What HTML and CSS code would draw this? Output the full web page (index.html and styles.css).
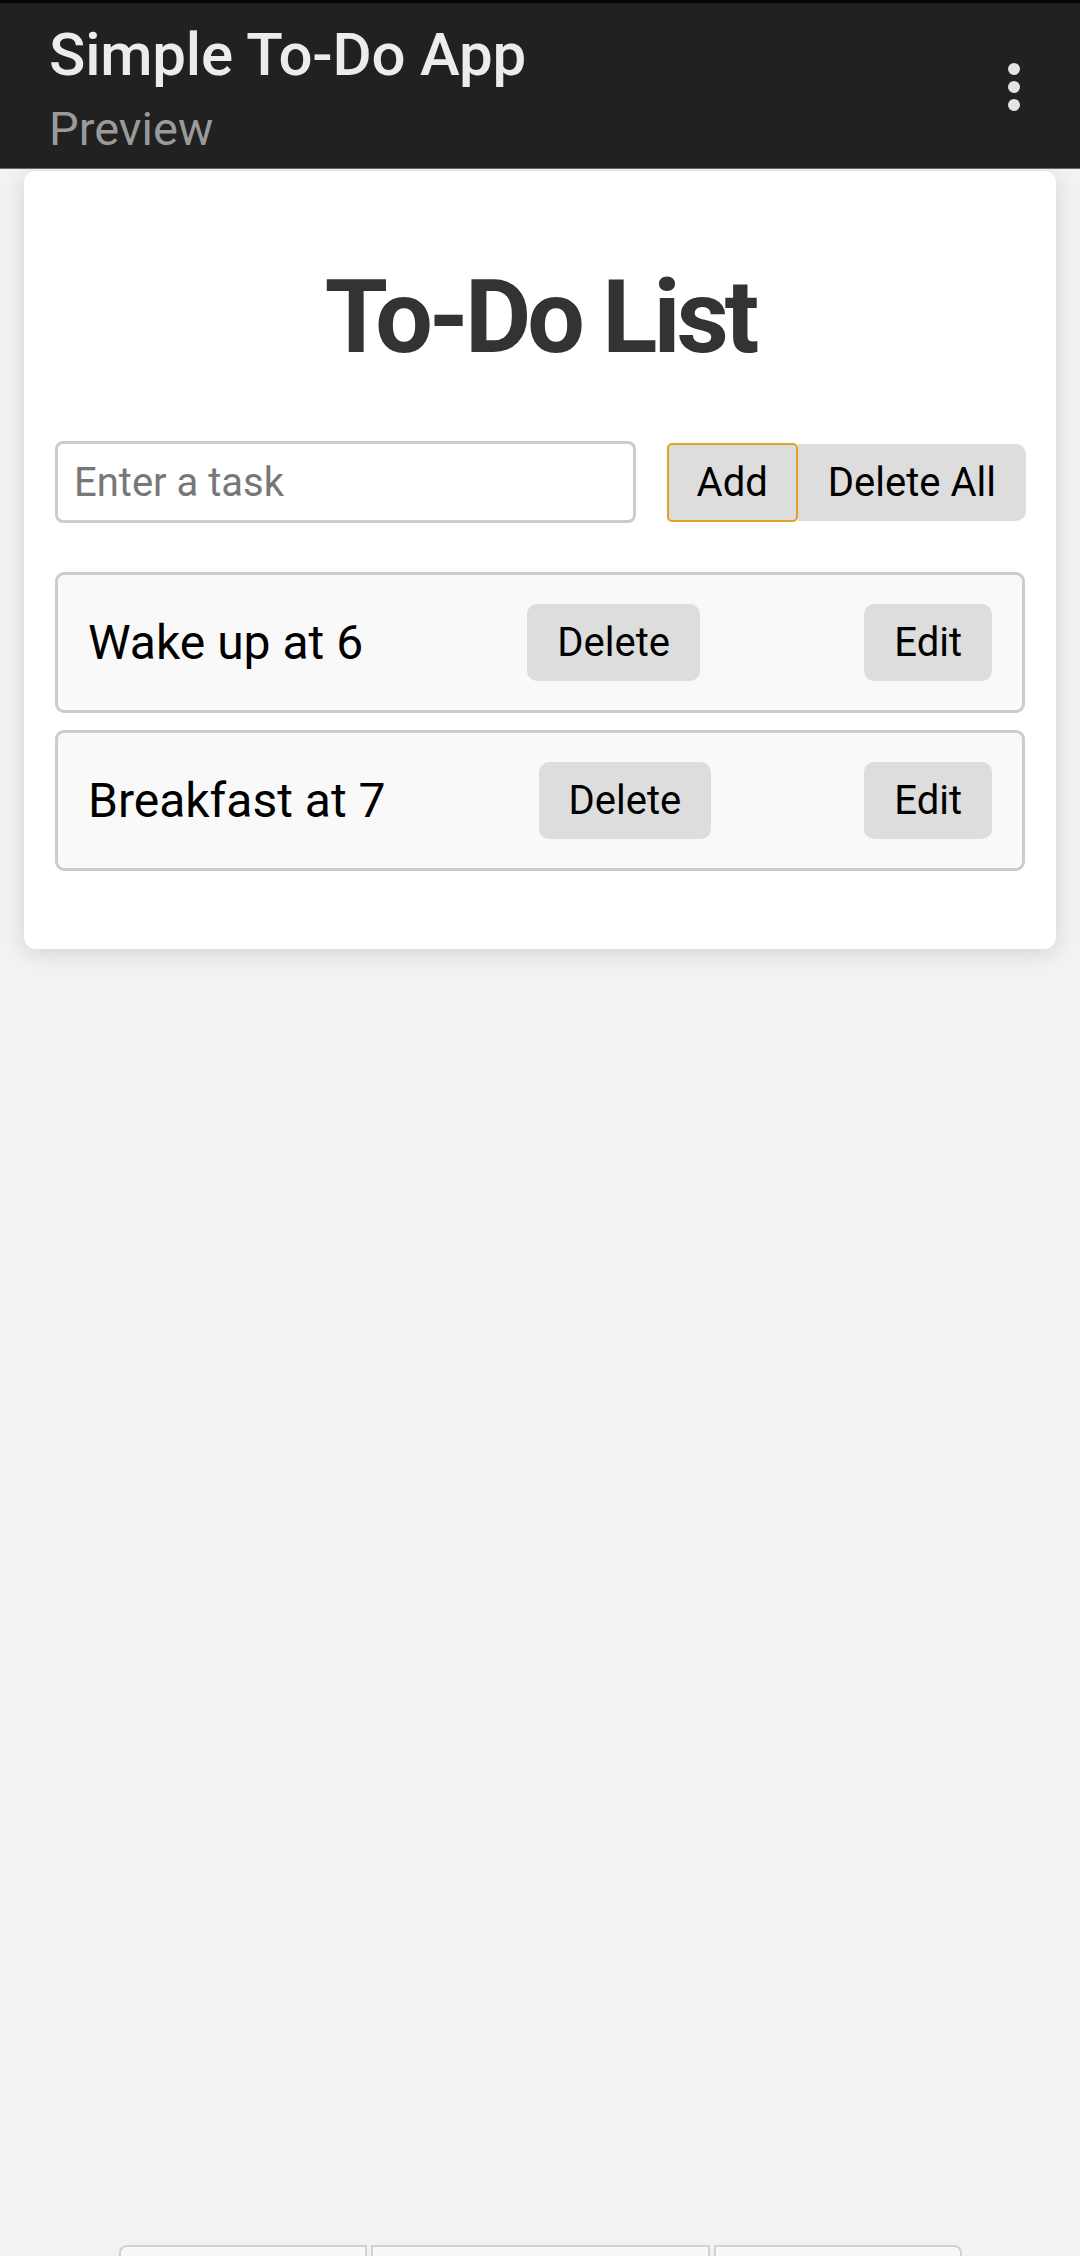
FILE: index.html
```html
<!DOCTYPE html>
<html lang="en">
<head>
<meta charset="utf-8">
<title>Simple To-Do App</title>
<link rel="stylesheet" href="styles.css">
</head>
<body>
  <header class="appbar">
    <div class="appbar-titles">
      <div class="appbar-title">Simple To-Do App</div>
      <div class="appbar-subtitle">Preview</div>
    </div>
    <div class="overflow-menu" aria-label="More options">
      <span class="dot"></span>
      <span class="dot"></span>
      <span class="dot"></span>
    </div>
  </header>

  <main class="card">
    <h1 class="card-title">To-Do List</h1>
    <div class="entry-row">
      <input class="task-input" type="text" placeholder="Enter a task">
      <button class="btn btn-add">Add</button>
      <button class="btn btn-delete-all">Delete All</button>
    </div>
    <ul class="task-list">
      <li class="task">
        <span class="task-text">Wake up at 6</span>
        <button class="btn btn-small">Delete</button>
        <button class="btn btn-small">Edit</button>
      </li>
      <li class="task">
        <span class="task-text">Breakfast at 7</span>
        <button class="btn btn-small">Delete</button>
        <button class="btn btn-small">Edit</button>
      </li>
    </ul>
  </main>

  <div class="bottom-bar">
    <span class="seg seg-first"></span>
    <span class="seg seg-mid"></span>
    <span class="seg seg-last"></span>
  </div>
</body>
</html>
```

FILE: styles.css
```css
html, body {
  margin: 0;
  padding: 0;
}

body {
  min-height: 2256px;
  background: #f2f2f2;
  font-family: Roboto, "Noto Sans", "Liberation Sans", sans-serif;
  display: flex;
  flex-direction: column;
  overflow: hidden;
}

.appbar {
  height: 165px;
  background: #212121;
  border-top: 3px solid #050505;
  display: flex;
  justify-content: space-between;
  align-items: center;
  padding: 0 60px 0 49px;
  box-sizing: content-box;
  border-bottom: 1px solid #6a6a6a;
}

.appbar-titles {
  align-self: flex-start;
  padding-top: 17px;
}

.appbar-title {
  font-size: 60px;
  line-height: 70px;
  color: #ececec;
  font-weight: 500;
  letter-spacing: -0.2px;
}

.appbar-subtitle {
  font-size: 47px;
  line-height: 54px;
  margin-top: 12px;
  color: #9a9a9a;
}

.overflow-menu {
  display: flex;
  flex-direction: column;
  gap: 6px;
  margin-top: 3px;
}

.dot {
  width: 12px;
  height: 12px;
  border-radius: 50%;
  background: #e4e4e4;
}

.card {
  margin: 2px 24px 0;
  padding: 30px 30px 30px;
  background: #ffffff;
  border-radius: 12px;
  box-shadow: 0 4px 22px rgba(0, 0, 0, 0.13);
}

.card-title {
  margin: 55px 0 63px;
  text-align: center;
  font-size: 102px;
  line-height: 122px;
  font-weight: 700;
  color: #333333;
  letter-spacing: -4px;
}

.entry-row {
  display: flex;
  align-items: center;
}

.task-input {
  flex: 1;
  height: 82px;
  box-sizing: border-box;
  border: 3px solid #cccccc;
  border-radius: 8px;
  padding: 0 16px;
  margin: 0 31px 0 1px;
  font-family: inherit;
  font-size: 40px;
  color: #222;
  background: #fff;
  outline: none;
}

.task-input::placeholder {
  color: #777777;
}

.btn {
  font-family: inherit;
  font-size: 40px;
  color: #000;
  background: #dddddd;
  border: none;
  cursor: pointer;
  padding: 0 30px;
  box-sizing: border-box;
}

.btn-add {
  height: 79px;
  padding: 0 28px;
  border: 2px solid #e2a228;
  border-radius: 5px;
}

.btn-delete-all {
  height: 77px;
  border-radius: 0 10px 10px 0;
}

.task-list {
  list-style: none;
  margin: 49px 1px 48px;
  padding: 0;
  display: flex;
  flex-direction: column;
  gap: 17px;
}

.task {
  height: 141px;
  box-sizing: border-box;
  border: 3px solid #cccccc;
  border-radius: 9px;
  background: #f9f9f9;
  padding: 0 30px;
  display: flex;
  justify-content: space-between;
  align-items: center;
}

.task-text {
  font-size: 48px;
  color: #000;
}

.btn-small {
  height: 77px;
  border-radius: 10px;
}

.bottom-bar {
  margin-top: auto;
  display: flex;
  justify-content: center;
  gap: 4px;
  height: 11px;
}

.seg {
  height: 12px;
  box-sizing: border-box;
  background: #f8f8f8;
  border: 2px solid #d2d2d2;
  border-bottom: none;
}

.seg-first {
  width: 248px;
  border-radius: 8px 0 0 0;
}

.seg-mid {
  width: 339px;
}

.seg-last {
  width: 248px;
  border-radius: 0 8px 0 0;
}
```
